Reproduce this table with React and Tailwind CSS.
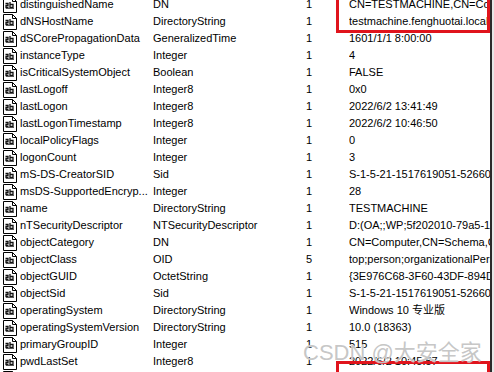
import React from 'react';

const rows = [
  ['distinguishedName', 'DN', '1', 'CN=TESTMACHINE,CN=Computers,DC=fenghuotai,DC=local'],
  ['dNSHostName', 'DirectoryString', '1', 'testmachine.fenghuotai.local'],
  ['dSCorePropagationData', 'GeneralizedTime', '1', '1601/1/1 8:00:00'],
  ['instanceType', 'Integer', '1', '4'],
  ['isCriticalSystemObject', 'Boolean', '1', 'FALSE'],
  ['lastLogoff', 'Integer8', '1', '0x0'],
  ['lastLogon', 'Integer8', '1', '2022/6/2 13:41:49'],
  ['lastLogonTimestamp', 'Integer8', '1', '2022/6/2 10:46:50'],
  ['localPolicyFlags', 'Integer', '1', '0'],
  ['logonCount', 'Integer', '1', '3'],
  ['mS-DS-CreatorSID', 'Sid', '1', 'S-1-5-21-1517619051-526605381-1103'],
  ['msDS-SupportedEncryp...', 'Integer', '1', '28'],
  ['name', 'DirectoryString', '1', 'TESTMACHINE'],
  ['nTSecurityDescriptor', 'NTSecurityDescriptor', '1', 'D:(OA;;WP;5f202010-79a5-11d0-9020-00c04fc2d4cf'],
  ['objectCategory', 'DN', '1', 'CN=Computer,CN=Schema,CN=Configuration'],
  ['objectClass', 'OID', '5', 'top;person;organizationalPerson;user;computer'],
  ['objectGUID', 'OctetString', '1', '{3E976C68-3F60-43DF-894D-2A1B7C0E}'],
  ['objectSid', 'Sid', '1', 'S-1-5-21-1517619051-526605381-1103'],
  ['operatingSystem', 'DirectoryString', '1', 'Windows 10 专业版'],
  ['operatingSystemVersion', 'DirectoryString', '1', '10.0 (18363)'],
  ['primaryGroupID', 'Integer', '1', '515'],
  ['pwdLastSet', 'Integer8', '1', '2022/6/2 10:45:57'],
  ['sAMAccountName', 'DirectoryString', '1', 'TESTMACHINE$'],
];

const AttrIcon = () => (
  <svg width="14" height="16" viewBox="0 0 14 16" className="shrink-0">
    <path d="M0.5 0.5 H9.5 L13.5 4.5 V15.5 H0.5 Z" fill="#fff" stroke="#000" />
    <path d="M9.5 0.5 V4.5 H13.5" fill="none" stroke="#000" />
    <path d="M2.5 6.5 H5 V8.5 H3 V10.5 H5.5" fill="none" stroke="#111" strokeWidth="1.3" />
    <path d="M7 5 V10.5 H10 V7.5 H7.5" fill="none" stroke="#111" strokeWidth="1.3" />
    <rect x="3" y="11" width="8" height="1" fill="#555" />
  </svg>
);

export default function App() {
  return (
    <div
      className="relative w-[494px] h-[372px] overflow-hidden bg-white flex text-[11px] text-black"
      style={{ fontFamily: '"Liberation Sans", "Noto Sans CJK SC", sans-serif' }}
    >
      <div className="w-[490px] overflow-hidden">
        <div className="-mt-[4px]">
          {rows.map(([name, type, count, value]) => (
            <div key={name} className="h-[17px] flex items-center whitespace-nowrap">
              <div className="w-[20px] pl-[3px] flex items-center">
                <AttrIcon />
              </div>
              <div className="w-[133px] overflow-hidden">{name}</div>
              <div className="w-[153px] overflow-hidden">{type}</div>
              <div className="w-[43px]">{count}</div>
              <div className="flex-1 overflow-hidden">{value}</div>
            </div>
          ))}
        </div>
      </div>
      <div className="w-[4px] border-l-2 border-[#2a2a2a] bg-[#e6e6e6]" />

      <div className="absolute left-[336px] top-[-3px] w-[154px] h-[36px] border-[3px] border-[#e0141c]" />
      <div className="absolute left-[336px] top-[361px] w-[154px] h-[20px] border-[3px] border-[#e0141c]" />
      <div
        className="absolute left-[303px] top-[336px] text-[22px] text-[#b8b8b8]/80 whitespace-nowrap"
        style={{ textShadow: '0 0 1px #fff' }}
      >
        CSDN @大安全家
      </div>
    </div>
  );
}
